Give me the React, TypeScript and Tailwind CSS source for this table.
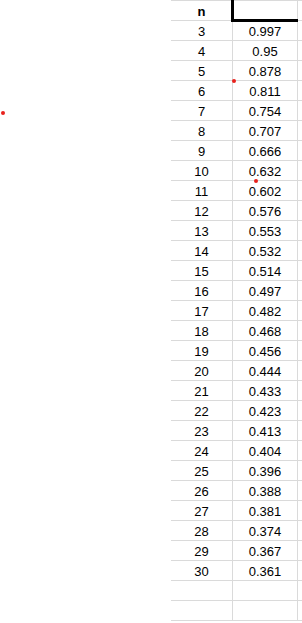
const VALUES: [number, string][] = [
  [3, '0.997'],
  [4, '0.95'],
  [5, '0.878'],
  [6, '0.811'],
  [7, '0.754'],
  [8, '0.707'],
  [9, '0.666'],
  [10, '0.632'],
  [11, '0.602'],
  [12, '0.576'],
  [13, '0.553'],
  [14, '0.532'],
  [15, '0.514'],
  [16, '0.497'],
  [17, '0.482'],
  [18, '0.468'],
  [19, '0.456'],
  [20, '0.444'],
  [21, '0.433'],
  [22, '0.423'],
  [23, '0.413'],
  [24, '0.404'],
  [25, '0.396'],
  [26, '0.388'],
  [27, '0.381'],
  [28, '0.374'],
  [29, '0.367'],
  [30, '0.361'],
];

function Row({ a, b, bold }: { a?: string; b?: string; bold?: boolean }) {
  return (
    <div className="flex h-[20px] border-b border-[#dadada]">
      <div
        className={
          'flex w-[62px] shrink-0 items-center justify-center border-r border-[#dadada] pt-[2px] ' +
          (bold ? 'font-bold' : '')
        }
      >
        {a}
      </div>
      <div className="flex w-[65px] shrink-0 items-center justify-center border-r border-[#dadada] pt-[2px]">
        {b}
      </div>
      <div className="flex-1" />
    </div>
  );
}

export default function App() {
  return (
    <div className="relative h-[623px] w-[302px] overflow-hidden bg-white font-['Liberation_Sans',Arial,sans-serif] text-[13px] leading-none text-black">
      <div className="ml-[171px] w-[131px] border-t border-[#dadada]">
        <Row a="n" bold />
        {VALUES.map(([n, v]) => (
          <Row key={n} a={String(n)} b={v} />
        ))}
        <Row />
        <Row />
      </div>

      {/* selected cell outline */}
      <div className="absolute left-[231px] top-0 h-[22px] w-[67px] border-b-[3px] border-l-[3px] border-black" />

      {/* red markers */}
      <span className="absolute left-[1px] top-[111px] size-[4px] rounded-full bg-[#e8211c]" />
      <span className="absolute left-[232px] top-[79px] size-[4px] rounded-full bg-[#e8211c]" />
      <span className="absolute left-[254px] top-[179px] size-[4px] rounded-full bg-[#e8211c]" />
    </div>
  );
}
